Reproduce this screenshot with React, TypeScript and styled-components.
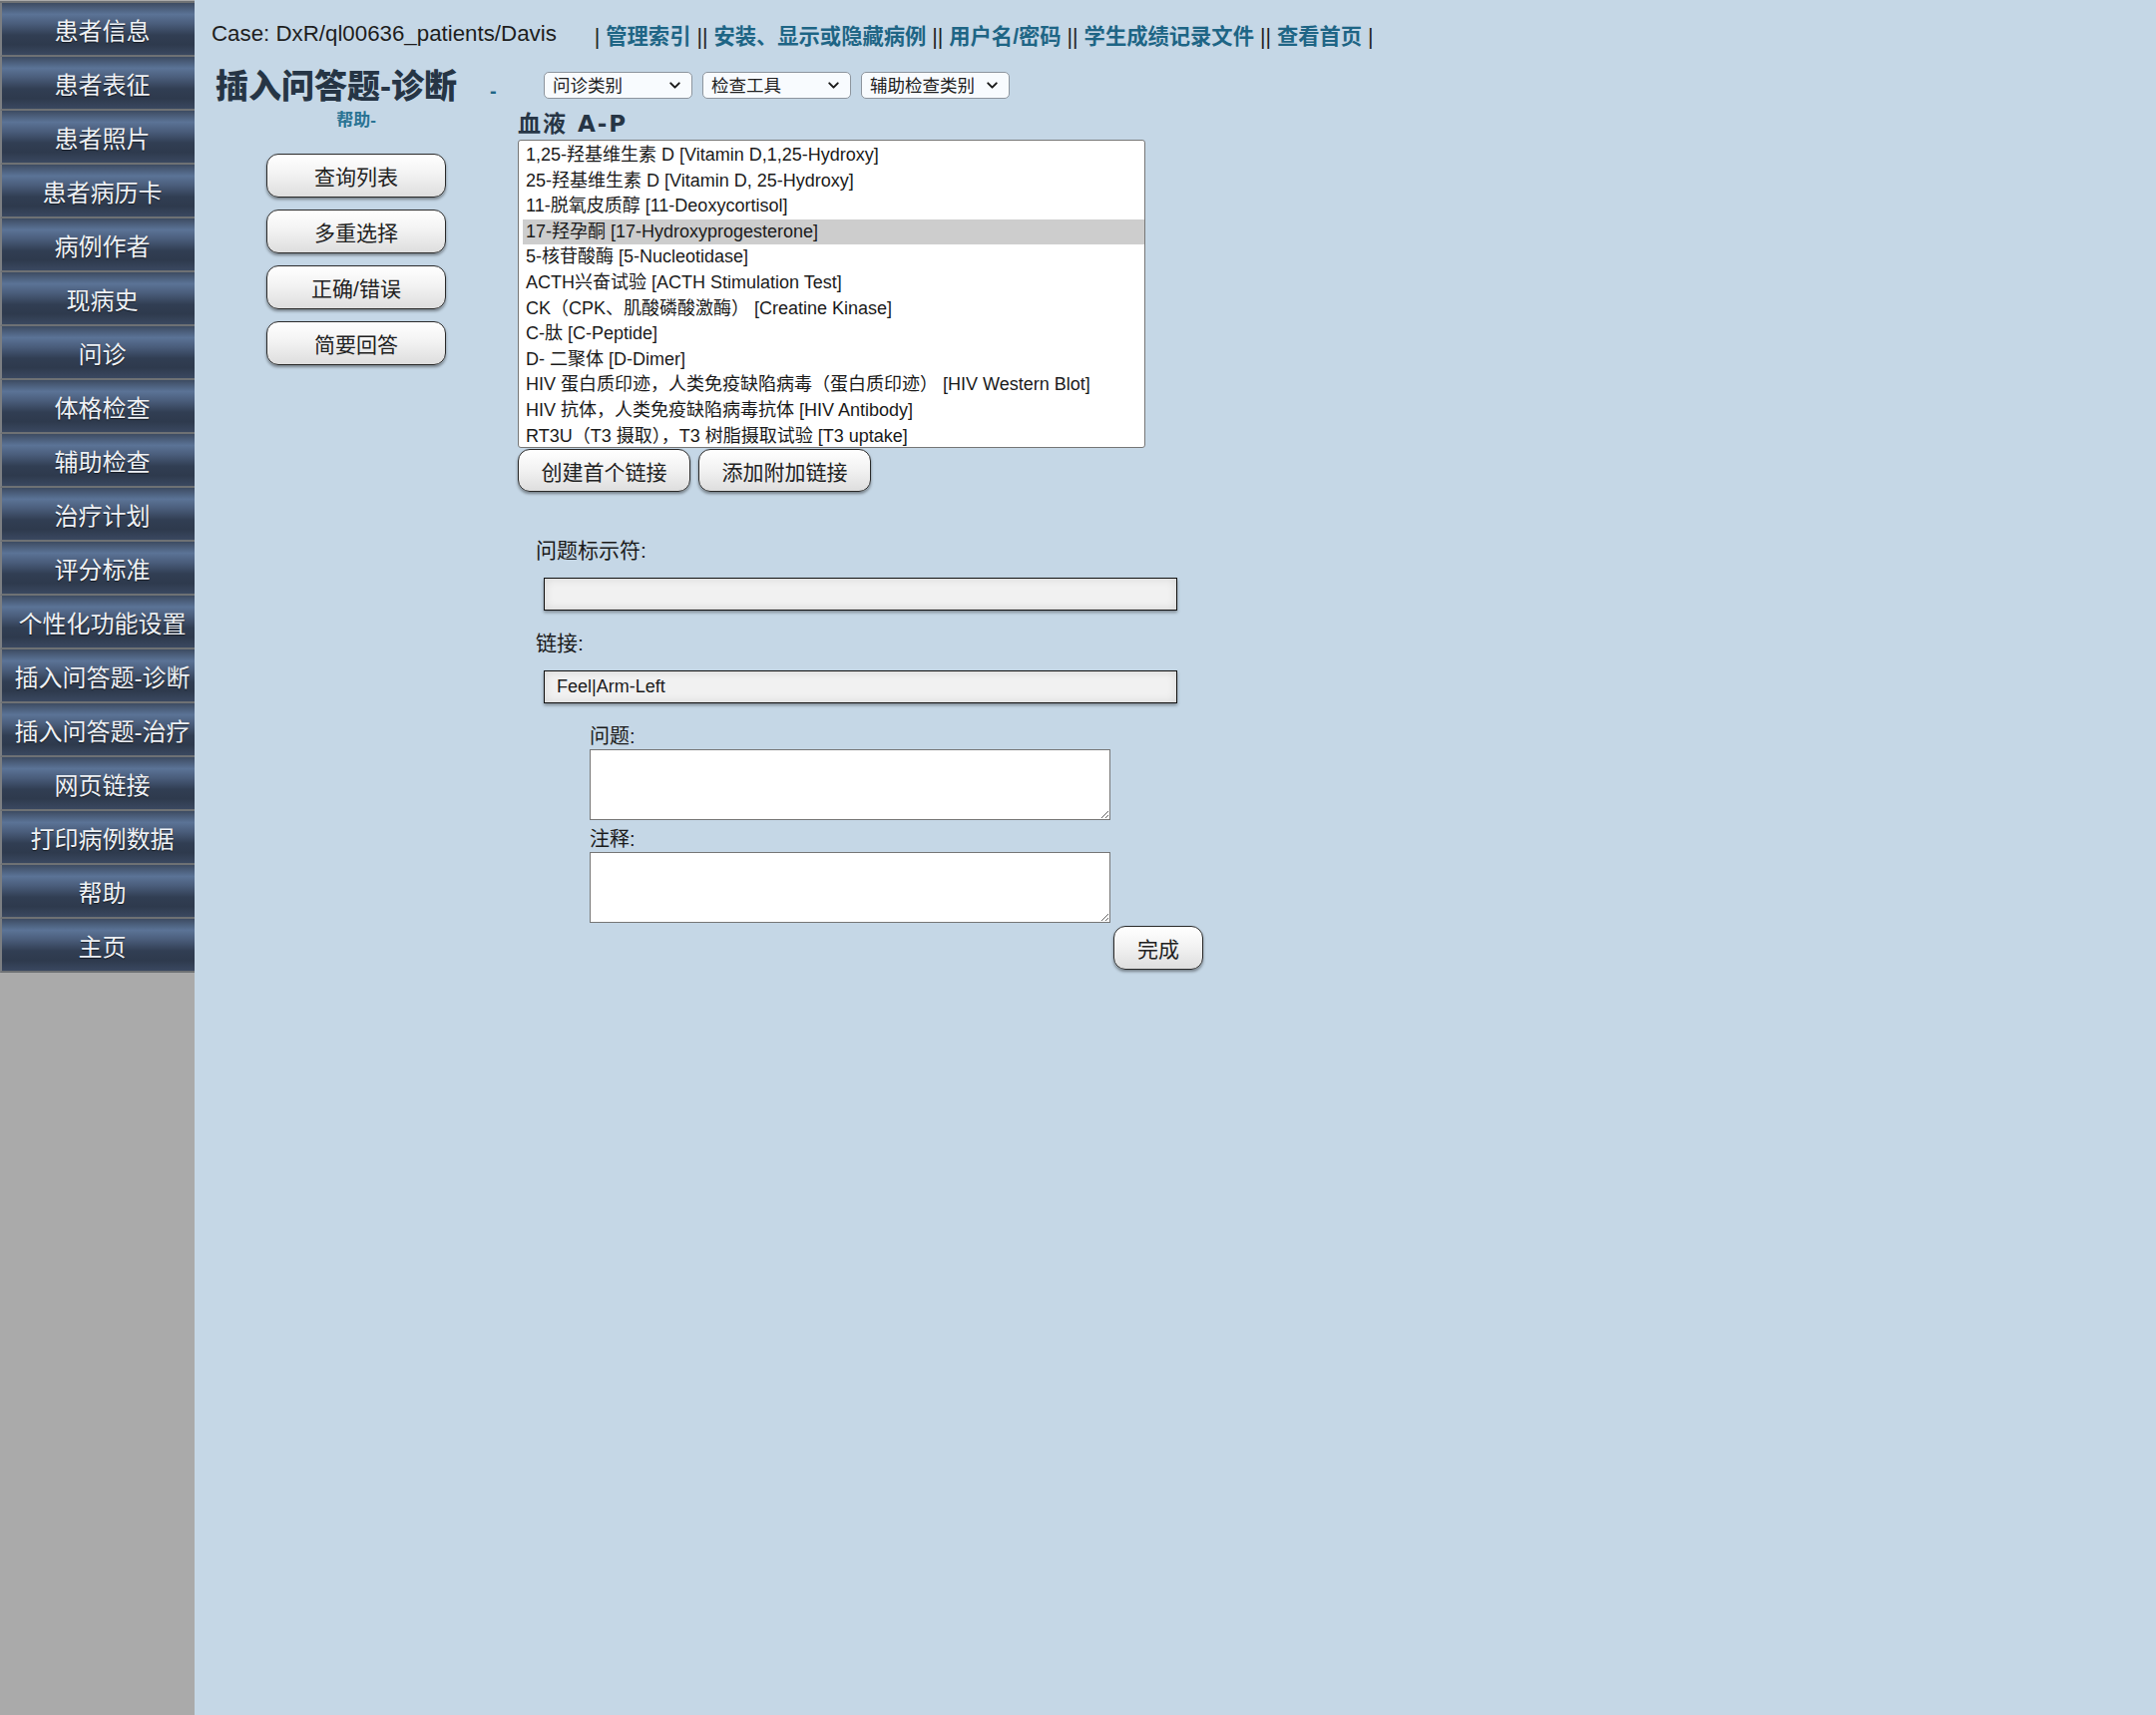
import React from 'react';
import styled, { createGlobalStyle } from 'styled-components';
import { ChevronDown } from 'lucide-react';

const GlobalStyle = createGlobalStyle`
  html, body {
    margin: 0;
    padding: 0;
  }

  body {
    background: #c5d7e6;
    font-family: "Liberation Sans", "Noto Sans CJK SC", sans-serif;
    color: #1c1c1c;
  }
`;

// Layout
const Page = styled.div`
  display: grid;
  grid-template-columns: 195px 1fr;
  min-height: 100vh;
`;

// Sidebar
const Sidebar = styled.nav`
  background: #aaaaaa;
  padding-top: 1px;
`;

const NavList = styled.div`
  display: flex;
  flex-direction: column;
  border-top: 2px solid #6e7174;
`;

const NavItem = styled.a`
  display: flex;
  align-items: center;
  justify-content: center;
  height: 52px;
  padding-left: 8px;
  border-left: 2px solid #7b7e82;
  border-bottom: 2px solid #6e7174;
  background: linear-gradient(
    to bottom,
    #3d4b62 0%,
    #5b7396 22%,
    #4a5d7b 40%,
    #313e53 62%,
    #2e3a4d 80%,
    #3a4860 100%
  );
  color: #eef1f5;
  font-size: 24px;
  text-decoration: none;
  text-shadow: 0 1px 1px rgba(0, 0, 0, 0.6);
  white-space: nowrap;
  cursor: pointer;
`;

// Main area
const Main = styled.main`
  padding: 19px 0 0 17px;
`;

const Header = styled.div`
  display: flex;
  align-items: center;
  height: 30px;
  white-space: nowrap;
`;

const CaseName = styled.span`
  font-size: 22.3px;
  color: #1e1e1e;
  margin-right: 38px;
`;

const NavLinks = styled.span`
  font-size: 21.3px;
  color: #222;
`;

const HeadLink = styled.a`
  color: #1e6585;
  font-weight: bold;
  text-decoration: none;
`;

const Workspace = styled.div`
  display: flex;
  margin-top: 13px;
`;

const LeftCol = styled.div`
  display: flex;
  flex-direction: column;
  width: 290px;
`;

const TitleRow = styled.div`
  display: flex;
  align-items: baseline;
  height: 44px;
  padding: 3px 0 0 4px;
`;

const Title = styled.h1`
  margin: 0;
  font-size: 33px;
  line-height: 44px;
  font-weight: 900;
  color: #263545;
  white-space: nowrap;
`;

const TitleDash = styled.span`
  margin-left: 33px;
  font-size: 20px;
  font-weight: bold;
  color: #1e6585;
`;

const Help = styled.a`
  margin-top: 2px;
  text-align: center;
  font-size: 17px;
  line-height: 20px;
  font-weight: bold;
  color: #2a7393;
  text-decoration: none;
`;

const ToolButtons = styled.div`
  display: flex;
  flex-direction: column;
  align-items: center;
  gap: 12px;
  margin-top: 23px;
`;

const PillButton = styled.button<{ $w: number; $h?: number }>`
  width: ${(p) => p.$w}px;
  height: ${(p) => p.$h || 44}px;
  border: 1px solid #2a2a2a;
  border-radius: 12px;
  background: linear-gradient(to bottom, #ffffff 0%, #f3f3f3 45%, #dedede 100%);
  box-shadow: 0 2px 3px rgba(0, 0, 0, 0.4);
  font-family: "Liberation Sans", "Noto Sans CJK SC", sans-serif;
  font-size: 21px;
  color: #222;
  padding: 0;
  white-space: nowrap;
  cursor: pointer;
`;

const RightCol = styled.div`
  display: flex;
  flex-direction: column;
  margin-left: 17px;
`;

const SelectRow = styled.div`
  display: flex;
  gap: 10px;
  margin: 10px 0 0 26px;
`;

const SelectWrap = styled.div`
  position: relative;
  width: 149px;
  height: 27px;

  svg {
    position: absolute;
    right: 9px;
    top: 5px;
    pointer-events: none;
    color: #1a1a1a;
  }
`;

const Select = styled.select`
  appearance: none;
  box-sizing: border-box;
  width: 100%;
  height: 100%;
  padding: 0 28px 0 8px;
  border: 1px solid #8d959e;
  border-radius: 5px;
  background: #f8fbfe;
  font-family: "Liberation Sans", "Noto Sans CJK SC", sans-serif;
  font-size: 17.5px;
  color: #222;
`;

const GroupHeading = styled.h2`
  margin: 11px 0 0;
  font-family: "DejaVu Sans", "Noto Sans CJK SC", sans-serif;
  font-size: 23px;
  line-height: 28px;
  font-weight: bold;
  letter-spacing: 2px;
  color: #263545;
`;

const ListBox = styled.div`
  box-sizing: border-box;
  width: 629px;
  height: 309px;
  margin-top: 2px;
  padding: 2px 0 2px 4px;
  border: 1px solid #767676;
  border-radius: 3px;
  background: #fff;
  overflow: hidden;
`;

const ListRow = styled.div<{ $selected?: boolean }>`
  height: 25.6px;
  line-height: 25.6px;
  padding-left: 3px;
  font-size: 18px;
  color: #1a1a1a;
  white-space: nowrap;
  background: ${(p) => (p.$selected ? '#cdcdcd' : 'transparent')};
`;

const LinkButtons = styled.div`
  display: flex;
  gap: 8px;
  margin-top: 1px;
`;

const FieldLabel = styled.label<{ $top: number }>`
  display: block;
  margin: ${(p) => p.$top}px 0 0 18px;
  font-size: 21px;
  line-height: 28px;
  color: #1a1a1a;
`;

const TextField = styled.input`
  box-sizing: border-box;
  width: 635px;
  height: 33px;
  margin: 13px 0 0 26px;
  padding: 0 12px;
  border: 1px solid #111;
  background: #f1f1f1;
  box-shadow: inset 0 0 10px rgba(0, 0, 0, 0.12), 0 2px 3px rgba(0, 0, 0, 0.35);
  font-family: "Liberation Sans", "Noto Sans CJK SC", sans-serif;
  font-size: 18px;
  color: #1a1a1a;
  outline: none;
`;

const NoteBlock = styled.div`
  display: flex;
  flex-direction: column;
  width: 615px;
  margin: 22px 0 0 72px;
`;

const SmallLabel = styled.label<{ $top?: number }>`
  margin-top: ${(p) => p.$top || 0}px;
  font-size: 20px;
  line-height: 22px;
  color: #1a1a1a;
`;

const NoteArea = styled.textarea`
  box-sizing: border-box;
  display: block;
  width: 522px;
  height: 71px;
  margin-top: 2px;
  border: 1px solid #767676;
  background: #fff;
  font-family: "Liberation Sans", "Noto Sans CJK SC", sans-serif;
  font-size: 16px;
`;

const DoneRow = styled.div`
  display: flex;
  justify-content: flex-end;
  margin-top: 3px;
`;

const navItems = [
  '患者信息',
  '患者表征',
  '患者照片',
  '患者病历卡',
  '病例作者',
  '现病史',
  '问诊',
  '体格检查',
  '辅助检查',
  '治疗计划',
  '评分标准',
  '个性化功能设置',
  '插入问答题-诊断',
  '插入问答题-治疗',
  '网页链接',
  '打印病例数据',
  '帮助',
  '主页',
];

const headLinks = ['管理索引', '安装、显示或隐藏病例', '用户名/密码', '学生成绩记录文件', '查看首页'];

const categories = ['问诊类别', '检查工具', '辅助检查类别'];

const tests = [
  '1,25-羟基维生素 D [Vitamin D,1,25-Hydroxy]',
  '25-羟基维生素 D [Vitamin D, 25-Hydroxy]',
  '11-脱氧皮质醇 [11-Deoxycortisol]',
  '17-羟孕酮 [17-Hydroxyprogesterone]',
  '5-核苷酸酶 [5-Nucleotidase]',
  'ACTH兴奋试验 [ACTH Stimulation Test]',
  'CK（CPK、肌酸磷酸激酶） [Creatine Kinase]',
  'C-肽 [C-Peptide]',
  'D- 二聚体 [D-Dimer]',
  'HIV 蛋白质印迹，人类免疫缺陷病毒（蛋白质印迹） [HIV Western Blot]',
  'HIV 抗体，人类免疫缺陷病毒抗体 [HIV Antibody]',
  'RT3U（T3 摄取），T3 树脂摄取试验 [T3 uptake]',
];

const App: React.FC = () => {
  return (
    <>
      <GlobalStyle />
      <Page>
        <Sidebar>
          <NavList>
            {navItems.map((item) => (
              <NavItem key={item}>{item}</NavItem>
            ))}
          </NavList>
        </Sidebar>

        <Main>
          <Header>
            <CaseName>Case: DxR/ql00636_patients/Davis</CaseName>
            <NavLinks>
              |{' '}
              {headLinks.map((link, i) => (
                <React.Fragment key={link}>
                  <HeadLink>{link}</HeadLink>
                  {i < headLinks.length - 1 ? ' || ' : ' |'}
                </React.Fragment>
              ))}
            </NavLinks>
          </Header>

          <Workspace>
            <LeftCol>
              <TitleRow>
                <Title>插入问答题-诊断</Title>
                <TitleDash>-</TitleDash>
              </TitleRow>
              <Help>帮助-</Help>
              <ToolButtons>
                <PillButton $w={180}>查询列表</PillButton>
                <PillButton $w={180}>多重选择</PillButton>
                <PillButton $w={180}>正确/错误</PillButton>
                <PillButton $w={180}>简要回答</PillButton>
              </ToolButtons>
            </LeftCol>

            <RightCol>
              <SelectRow>
                {categories.map((c) => (
                  <SelectWrap key={c}>
                    <Select defaultValue={c}>
                      <option value={c}>{c}</option>
                    </Select>
                    <ChevronDown size={17} strokeWidth={2.8} />
                  </SelectWrap>
                ))}
              </SelectRow>

              <GroupHeading>血液 A-P</GroupHeading>
              <ListBox>
                {tests.map((t, i) => (
                  <ListRow key={t} $selected={i === 3}>
                    {t}
                  </ListRow>
                ))}
              </ListBox>

              <LinkButtons>
                <PillButton $w={173} $h={43}>创建首个链接</PillButton>
                <PillButton $w={173} $h={43}>添加附加链接</PillButton>
              </LinkButtons>

              <FieldLabel $top={45}>问题标示符:</FieldLabel>
              <TextField defaultValue="" />
              <FieldLabel $top={19}>链接:</FieldLabel>
              <TextField defaultValue="Feel|Arm-Left" />

              <NoteBlock>
                <SmallLabel>问题:</SmallLabel>
                <NoteArea />
                <SmallLabel $top={8}>注释:</SmallLabel>
                <NoteArea />
                <DoneRow>
                  <PillButton $w={90}>完成</PillButton>
                </DoneRow>
              </NoteBlock>
            </RightCol>
          </Workspace>
        </Main>
      </Page>
    </>
  );
};

export default App;
